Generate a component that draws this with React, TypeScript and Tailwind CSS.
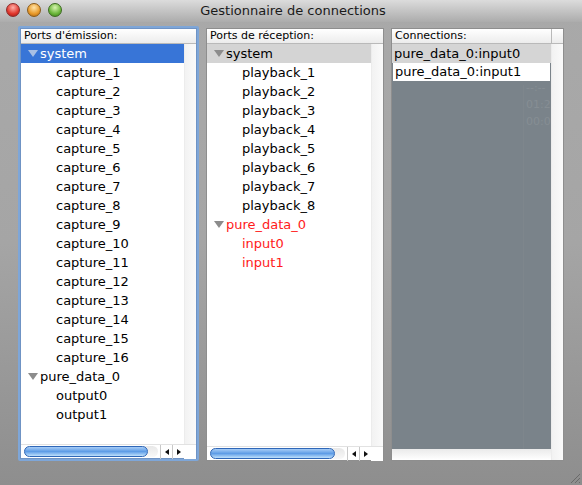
import React from 'react';

const font = { fontFamily: '"DejaVu Sans", "Liberation Sans", sans-serif' };

function Triangle({ color = '#8c8c8c' }: { color?: string }) {
  return (
    <svg width="10" height="7" viewBox="0 0 10 7" className="shrink-0">
      <path d="M0 0 L10 0 L5 7 Z" fill={color} />
    </svg>
  );
}

function HScroll({ thumb }: { thumb: number }) {
  return (
    <div className="h-[14px] flex items-center bg-white border-t border-[#e2e2e2]">
      <div className="flex-1 h-[14px] flex items-center pl-[3px]">
        <div className="relative h-[11px] flex-1 mr-[2px] rounded-full bg-gradient-to-b from-[#e8e8e8] to-[#f8f8f8]">
          <div
            className="absolute left-0 top-0 h-[11px] rounded-full border border-[#2f67b8] bg-gradient-to-b from-[#a8cdf6] via-[#5e9ce6] to-[#bfe0fb]"
            style={{ width: thumb }}
          />
        </div>
      </div>
      <div className="w-[12px] h-[14px] flex items-center justify-center border-l border-[#c8c8c8]">
        <svg width="4" height="6" viewBox="0 0 4 6"><path d="M4 0 L0 3 L4 6 Z" fill="#111" /></svg>
      </div>
      <div className="w-[12px] h-[14px] flex items-center justify-center border-l border-[#c8c8c8]">
        <svg width="4" height="6" viewBox="0 0 4 6"><path d="M0 0 L4 3 L0 6 Z" fill="#111" /></svg>
      </div>
      <div className="w-[12px] h-[14px] bg-white" />
    </div>
  );
}

function Header({ label, divider }: { label: string; divider?: boolean }) {
  return (
    <div className="h-[15px] flex items-stretch bg-gradient-to-b from-white to-[#ececec] border-b border-[#b9b9b9] text-[11px] text-black">
      <div className="flex-1 pl-[3px] leading-[14px]">{label}</div>
      {divider ? <div className="w-[12px] border-l border-[#b9b9b9]" /> : null}
    </div>
  );
}

function Row({
  label,
  indent,
  group,
  bg,
  color = '#000',
}: {
  label: string;
  indent?: boolean;
  group?: boolean;
  bg?: string;
  color?: string;
}) {
  return (
    <div className="h-[19px] flex items-center text-[13px]" style={{ background: bg, color }}>
      {group ? (
        <div className="flex items-center pl-[7px] gap-[2px]">
          <Triangle color={bg === '#3875d7' ? '#a9c0e4' : '#8c8c8c'} />
          <span>{label}</span>
        </div>
      ) : (
        <span className={indent ? 'pl-[35px]' : ''}>{label}</span>
      )}
    </div>
  );
}

function RightStrip() {
  return <div className="w-[12px] bg-gradient-to-r from-[#f2f2f2] to-[#fafafa] border-l border-[#ececec]" />;
}

export default function App() {
  const captures = Array.from({ length: 16 }, (_, i) => `capture_${i + 1}`);
  const playbacks = Array.from({ length: 8 }, (_, i) => `playback_${i + 1}`);

  return (
    <div
      className="w-[582px] h-[485px] flex flex-col overflow-hidden bg-gradient-to-b from-[#a9a9a9] via-[#a5a5a5] to-[#8e8e8e]"
      style={font}
    >
      {/* Title bar */}
      <div className="h-[22px] shrink-0 relative flex items-center justify-center bg-gradient-to-b from-[#dcdcdc] to-[#acacac]">
        <div className="absolute left-[6px] top-[3px] flex gap-[7px]">
          <div className="w-[14px] h-[14px] rounded-full border border-[#8a2a2a] bg-[radial-gradient(circle_at_50%_30%,#ffb0a8,#e0362c_60%,#a01810)]" />
          <div className="w-[14px] h-[14px] rounded-full border border-[#8a5a18] bg-[radial-gradient(circle_at_50%_30%,#ffe4a8,#e89a2a_60%,#a86010)]" />
          <div className="w-[14px] h-[14px] rounded-full border border-[#3c6a20] bg-[radial-gradient(circle_at_50%_30%,#d8f4b0,#6ab63a_60%,#3a7818)]" />
        </div>
        <span className="text-[13px] text-[#1a1a1a] pl-[4px]">Gestionnaire de connections</span>
      </div>

      <div className="flex pt-[4px] pl-[18px] gap-[7px]">
        {/* Panel 1 */}
        <div className="w-[181px] h-[435px] p-[2px] bg-[#7ea6d8] rounded-[2px] flex">
          <div className="flex-1 flex flex-col bg-white border border-[#6f93c4]">
            <Header label="Ports d'émission:" />
            <div className="flex-1 flex">
              <div className="flex-1 flex flex-col">
                <Row label="system" group bg="#3875d7" color="#fff" />
                {captures.map((c) => (
                  <Row key={c} label={c} indent />
                ))}
                <Row label="pure_data_0" group />
                <Row label="output0" indent />
                <Row label="output1" indent />
              </div>
              <RightStrip />
            </div>
            <HScroll thumb={124} />
          </div>
        </div>

        {/* Panel 2 */}
        <div className="w-[178px] h-[433px] mt-[2px] flex flex-col bg-white border border-[#8e8e8e]">
          <Header label="Ports de réception:" />
          <div className="flex-1 flex">
            <div className="flex-1 flex flex-col">
              <Row label="system" group bg="#d4d4d4" />
              {playbacks.map((p) => (
                <Row key={p} label={p} indent />
              ))}
              <Row label="pure_data_0" group color="#ff1a1a" />
              <Row label="input0" indent color="#ff1a1a" />
              <Row label="input1" indent color="#ff1a1a" />
            </div>
            <RightStrip />
          </div>
          <HScroll thumb={125} />
        </div>

        {/* Panel 3 */}
        <div className="w-[173px] h-[433px] mt-[2px] flex flex-col bg-white border border-[#8e8e8e]">
          <Header label="Connections:" divider />
          <div className="flex-1 flex">
            <div className="flex-1 flex flex-col">
              <div className="h-[19px] flex items-center pl-[2px] text-[13px] bg-[#d5d5d5]">pure_data_0:input0</div>
              <div className="flex-1 bg-[#7a838a] relative overflow-hidden">
                <div className="h-[18px] mx-[1px] flex items-center pl-[2px] text-[13px] bg-white">pure_data_0:input1</div>
                <div className="absolute left-[131px] top-[22px] bottom-0 border-l border-[#7e868c]" />
                <div className="absolute left-[134px] top-[16px] text-[11px] leading-[17px] text-[#868e94]">
                  <div>--:--</div>
                  <div>01:2</div>
                  <div>00:0</div>
                </div>
              </div>
              <div className="h-[11px] bg-gradient-to-b from-[#eaeaea] to-white" />
            </div>
            <RightStrip />
          </div>
        </div>
      </div>

      {/* resize grip */}
      <div className="flex-1 relative">
        <svg width="12" height="12" viewBox="0 0 12 12" className="absolute right-[1px] bottom-[1px]">
          <path d="M11 2 L2 11 M11 6 L6 11 M11 10 L10 11" stroke="#6a6a6a" strokeWidth="1" />
        </svg>
      </div>
    </div>
  );
}
